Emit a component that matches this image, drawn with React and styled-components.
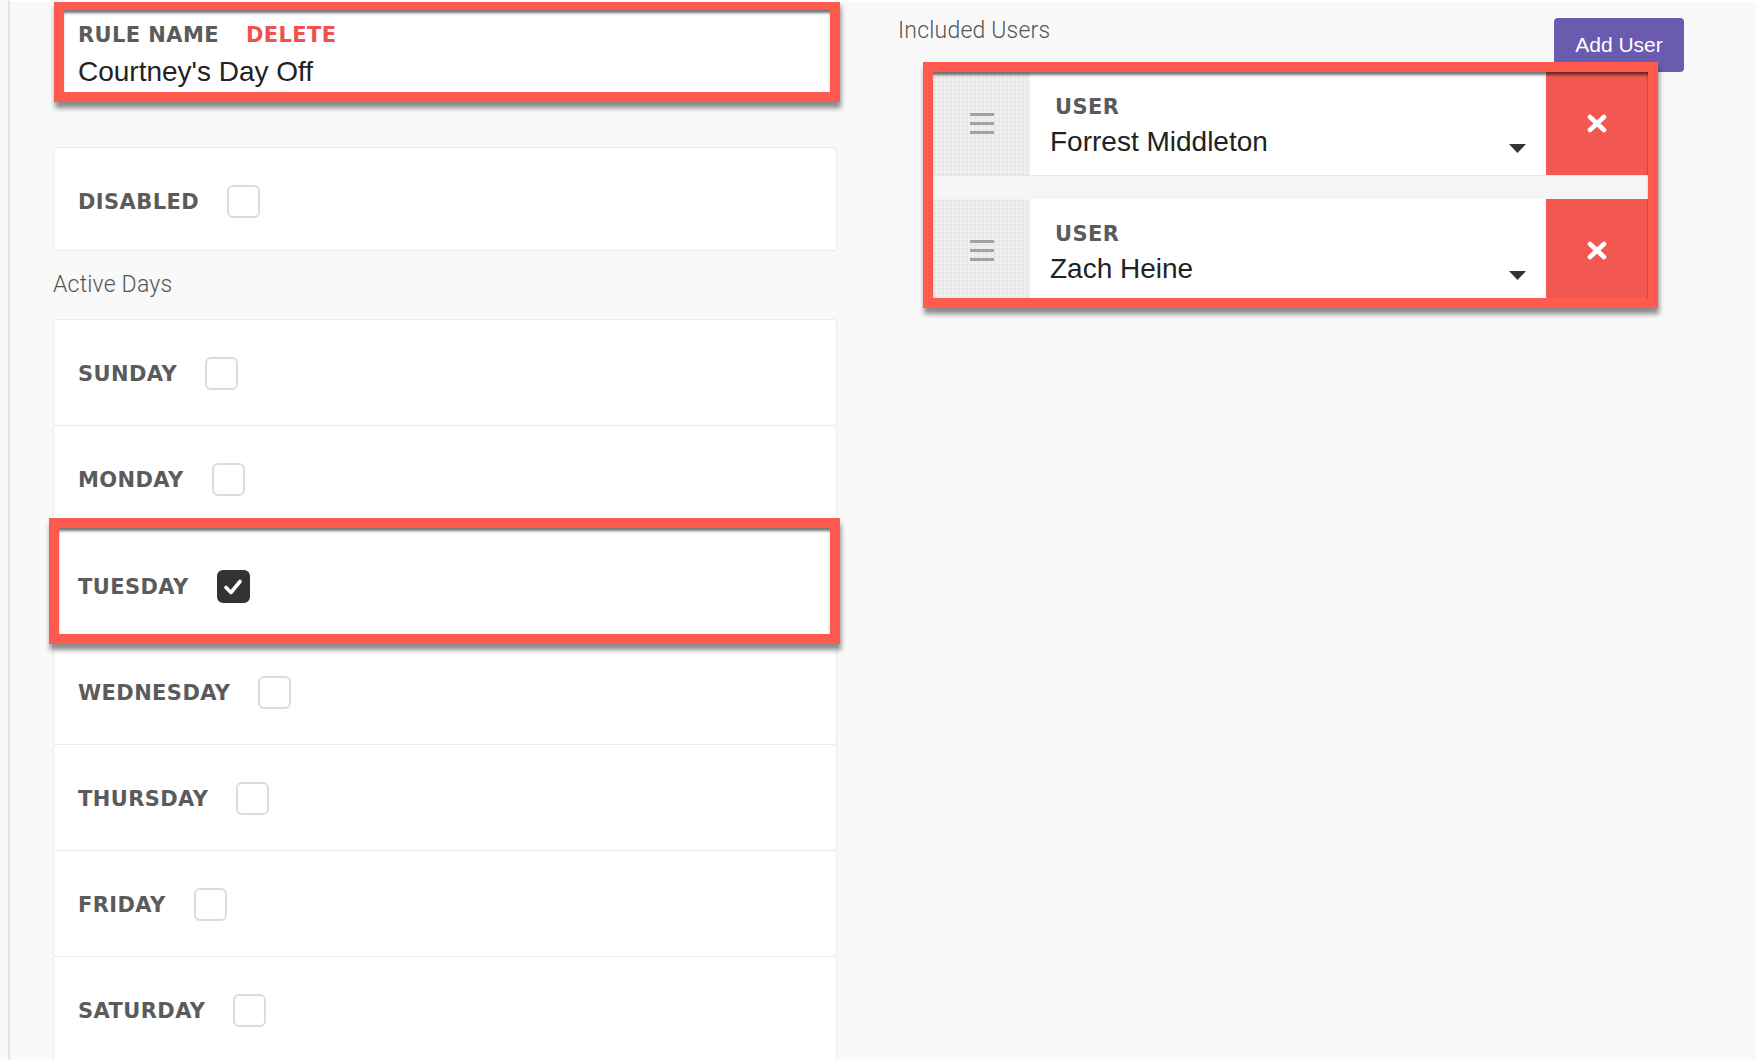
import React from 'react'
import styled, { createGlobalStyle } from 'styled-components'

const GlobalStyle = createGlobalStyle`
    html, body {
        margin: 0;
        padding: 0;
        background: #f9f9f9;
    }
    body {
        font-family: "Liberation Sans", Arial, sans-serif;
    }
`;

const Page = styled.div`
    display: flex;
    align-items: flex-start;
    height: 1060px;
    overflow: hidden;
    margin-left: 8px;
    border-left: 2px solid #e4e4e4;
    border-top: 2px solid #fff;
    padding-left: 43px;
    box-sizing: border-box;
`;

const LeftColumn = styled.div`
    width: 784px;
    flex-shrink: 0;
    display: flex;
    flex-direction: column;
    margin-top: -2px;
`;

const RightColumn = styled.div`
    width: 786px;
    flex-shrink: 0;
    margin-left: 61px;
    margin-top: -2px;
    display: flex;
    flex-direction: column;
`;

// red annotation frame drawn round the highlighted parts
const Highlight = styled.div`
    position: relative;
    z-index: 1;
    border: 10px solid #fe5a4d;
    background: #fff;
    box-shadow: 1px 6px 5px rgba(0, 0, 0, 0.45);

    &::after {
        content: '';
        position: absolute;
        inset: 0;
        box-shadow: inset 0 4px 3px -1px rgba(0, 0, 0, 0.55);
        pointer-events: none;
    }
`;

const RuleBox = styled(Highlight)`
    margin: 0 -3px 0 1px;
    padding: 14px 16px 5px 14px;
`;

const LabelRow = styled.div`
    display: flex;
    gap: 27px;
`;

const Label = styled.span`
    display: block;
    font-family: "DejaVu Sans", sans-serif;
    font-weight: 700;
    font-size: 21px;
    line-height: 22px;
    letter-spacing: 0.4px;
    color: ${p => p.$danger ? '#f0504f' : '#5b5b5b'};
`;

const Value = styled.div`
    font-size: 28px;
    line-height: 30px;
    color: #222;
    margin-top: ${p => p.$gap ?? 11}px;
`;

const Card = styled.div`
    display: flex;
    align-items: center;
    box-sizing: border-box;
    height: ${p => p.$h || 107}px;
    margin-top: ${p => p.$top ?? -1}px;
    padding: ${p => p.$pt || 2}px 0 0 24px;
    background: #fff;
    border: 1px solid #ebebeb;
    border-radius: 3px;
`;

const DayHighlight = styled(Highlight)`
    display: flex;
    align-items: center;
    height: 126px;
    box-sizing: border-box;
    margin: -14px -3px -6px -4px;
    padding: 11px 0 0 19px;
`;

const SectionTitle = styled.div`
    font-family: Roboto, "Liberation Sans", sans-serif;
    font-weight: 300;
    font-size: 23px;
    line-height: 26px;
    letter-spacing: 0.2px;
    color: #555;
    margin: ${p => p.$margin};
`;

const Checkbox = styled.span`
    display: inline-flex;
    align-items: center;
    justify-content: center;
    width: 33px;
    height: 33px;
    box-sizing: border-box;
    margin-left: 28px;
    border-radius: 6px;
    border: 2px solid ${p => p.$checked ? '#333' : '#dcdcdc'};
    background: ${p => p.$checked ? '#333' : '#fff'};
`;

const Header = styled.div`
    display: flex;
    justify-content: space-between;
    align-items: flex-start;
    padding-top: 18px;
`;

const AddButton = styled.button`
    width: 130px;
    height: 54px;
    border: none;
    border-radius: 4px;
    background: #6b5bae;
    color: #fff;
    font-family: "Liberation Sans", Arial, sans-serif;
    font-size: 21px;
    padding: 0;
`;

const UsersBox = styled(Highlight)`
    margin: -10px 26px 0 25px;
`;

const UserList = styled.div`
    height: 226px;
    overflow: hidden;
    display: flex;
    flex-direction: column;
    gap: 23px;
    background: #f5f5f5;
`;

const UserRow = styled.div`
    display: flex;
    height: 104px;
    flex-shrink: 0;
    border-bottom: 1px solid #e8e8e8;
    box-sizing: border-box;
`;

const Handle = styled.div`
    width: 97px;
    display: flex;
    align-items: center;
    justify-content: center;
    background-color: #efefef;
    background-image: radial-gradient(#e4e4e4 1px, transparent 1px);
    background-size: 4px 4px;
`;

const UserContent = styled.div`
    width: 516px;
    box-sizing: border-box;
    display: flex;
    flex-direction: column;
    padding: 24px 20px 0 25px;
    background: #fff;
`;

const NameRow = styled.div`
    display: flex;
    align-items: center;
    justify-content: space-between;
    margin-top: 9px;
    margin-left: -5px;

    svg {
        margin-top: 12px;
    }
`;

const RemoveButton = styled.div`
    width: 102px;
    display: flex;
    align-items: center;
    justify-content: center;
    background: #f35752;
    border-right: 1px dotted rgba(0, 0, 0, 0.18);
    box-sizing: border-box;
`;

const days = [
    { name: 'SUNDAY' },
    { name: 'MONDAY' },
    { name: 'TUESDAY', checked: true },
    { name: 'WEDNESDAY' },
    { name: 'THURSDAY' },
    { name: 'FRIDAY' },
    { name: 'SATURDAY' },
];

const users = ['Forrest Middleton', 'Zach Heine'];

function Check({ checked }) {
    return (
        <Checkbox $checked={checked}>
            {checked && (
                <svg width="20" height="18" viewBox="0 0 20 18">
                    <path d="M3 9.5 L8 14.5 L17 3.5" fill="none" stroke="#fff" strokeWidth="3.6" strokeLinecap="round" strokeLinejoin="round" />
                </svg>
            )}
        </Checkbox>
    )
}

function App() {
    return (
        <>
            <GlobalStyle />
            <Page>
                <LeftColumn>
                    <RuleBox>
                        <LabelRow>
                            <Label>RULE NAME</Label>
                            <Label $danger>DELETE</Label>
                        </LabelRow>
                        <Value>Courtney's Day Off</Value>
                    </RuleBox>

                    <Card $top={45} $h={104} $pt={5}>
                        <Label>DISABLED</Label>
                        <Check />
                    </Card>

                    <SectionTitle $margin="21px 0 21px">Active Days</SectionTitle>

                    <div>
                        {days.map((d, i) => d.checked ? (
                            <DayHighlight key={d.name}>
                                <Label>{d.name}</Label>
                                <Check checked />
                            </DayHighlight>
                        ) : (
                            <Card key={d.name} $top={i === 0 ? 0 : -1}>
                                <Label>{d.name}</Label>
                                <Check />
                            </Card>
                        ))}
                    </div>
                </LeftColumn>

                <RightColumn>
                    <Header>
                        <SectionTitle $margin="0">Included Users</SectionTitle>
                        <AddButton>Add User</AddButton>
                    </Header>

                    <UsersBox>
                        <UserList>
                            {users.map(u => (
                                <UserRow key={u}>
                                    <Handle>
                                        <svg width="24" height="21" viewBox="0 0 24 21">
                                            <rect x="0" y="0" width="24" height="3" fill="#a3a3a3" />
                                            <rect x="0" y="9" width="24" height="3" fill="#a3a3a3" />
                                            <rect x="0" y="18" width="24" height="3" fill="#a3a3a3" />
                                        </svg>
                                    </Handle>
                                    <UserContent>
                                        <Label>USER</Label>
                                        <NameRow>
                                            <Value $gap={0}>{u}</Value>
                                            <svg width="17" height="9" viewBox="0 0 17 9">
                                                <path d="M0 0 H17 L8.5 9 Z" fill="#333" />
                                            </svg>
                                        </NameRow>
                                    </UserContent>
                                    <RemoveButton>
                                        <svg width="20" height="19" viewBox="0 0 20 19">
                                            <path d="M3 3 L17 16 M17 3 L3 16" stroke="#fff" strokeWidth="4.6" strokeLinecap="round" />
                                        </svg>
                                    </RemoveButton>
                                </UserRow>
                            ))}
                        </UserList>
                    </UsersBox>
                </RightColumn>
            </Page>
        </>
    )
}

export default App
